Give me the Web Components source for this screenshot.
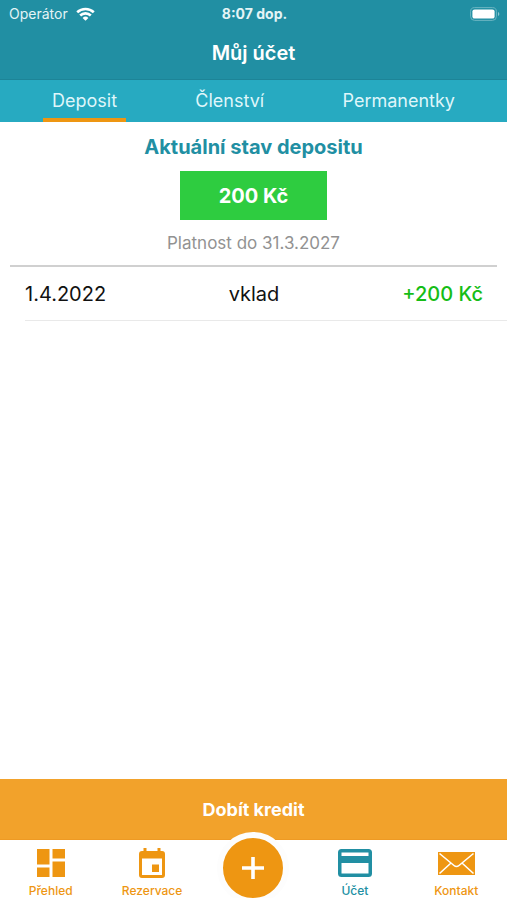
<!DOCTYPE html>
<html lang="cs">
<head>
<meta charset="utf-8">
<meta name="viewport" content="width=device-width, initial-scale=1">
<title>Můj účet</title>
<style>
  html, body { margin: 0; height: 100%; }
  body {
    font-family: Inter, Roboto, "Liberation Sans", sans-serif;
    color: #111;
    background: #fff;
    --teal: #218fa3;
    --cyan: #27aac1;
    --orange: #ee9612;
  }
</style>
</head>
<body>
<account-app></account-app>
<script>
const define = (name, html) => {
  const template = document.createElement('template');
  template.innerHTML = html;
  customElements.define(name, class extends HTMLElement {
    constructor() {
      super();
      this.attachShadow({ mode: 'open' }).append(template.content.cloneNode(true));
    }
  });
};

define('status-bar', `
  <style>
    :host { display: grid; grid-template-columns: 1fr auto 1fr; align-items: center; height: 28px; padding: 0 7px 0 9px; font-size: 14px; line-height: 28px; color: #e4f4f6; }
    .carrier { display: flex; align-items: center; gap: 8px; }
    time { font-weight: 700; }
    .battery { justify-self: end; }
    svg { display: block; }
  </style>
  <span class="carrier"><span>Operátor</span>
    <svg width="19" height="14" viewBox="0 0 19 14" aria-hidden="true" fill="none" stroke="#fff" stroke-width="2.6">
      <path d="M1.2 5.3a12 12 0 0 1 16.6 0"/><path d="M4.2 8.5a7.6 7.6 0 0 1 10.6 0"/>
      <path d="M6.6 10.9a4.2 4.2 0 0 1 5.8 0L9.5 13.8z" fill="#fff" stroke="none"/>
    </svg>
  </span>
  <time>8:07 dop.</time>
  <svg class="battery" width="30" height="14" viewBox="0 0 30 14" aria-hidden="true">
    <rect x=".6" y=".6" width="25.8" height="12.8" rx="4" fill="none" stroke="#6bb5c2"/>
    <rect x="2.4" y="2.4" width="22.2" height="9.2" rx="2.2" fill="#fff"/>
    <path d="M28 5c1.8.6 1.8 3.4 0 4z" fill="#8bc6d0"/>
  </svg>`);

define('page-title', `
  <style>
    :host { display: block; height: 51px; border-bottom: 1px solid #1d8497; }
    h1 { margin: 0; font-size: 20px; line-height: 50px; font-weight: 600; text-align: center; color: #fff; }
  </style>
  <h1><slot></slot></h1>`);

define('tab-bar', `
  <style>
    :host { display: flex; justify-content: space-between; height: 42px; padding: 0 43px; background: var(--cyan); }
  </style>
  <slot></slot>`);

define('tab-item', `
  <style>
    :host { display: flex; }
    button { padding: 4px 9px 0; border: 0; border-bottom: 4px solid transparent; background: none; font: inherit; font-size: 18px; line-height: 34px; color: #dff6fa; }
    :host([selected]) button { border-color: var(--orange); }
  </style>
  <button type="button"><slot></slot></button>`);

define('deposit-summary', `
  <style>
    :host { display: flex; flex-direction: column; align-items: center; margin: 0 10px; padding: 11px 0 9px; border-bottom: 2px solid #d0d0d0; }
    h2 { margin: 0; font-size: 20px; line-height: 28px; font-weight: 700; color: var(--teal); }
    .balance { margin: 10px 0; padding: 1px 39px 0; background: #2ecc40; color: #fff; font-size: 20px; line-height: 48px; font-weight: 700; }
    p { margin: 0; font-size: 17px; line-height: 26px; color: #929292; }
  </style>
  <h2><slot name="heading"></slot></h2>
  <div class="balance"><slot name="balance"></slot></div>
  <p><slot name="validity"></slot></p>`);

define('transaction-list', `
  <style>
    :host { display: block; }
    .list { margin-left: 25px; border-bottom: 1px solid #e9e9e9; padding-right: 24px; }
    table { width: 100%; table-layout: fixed; border-collapse: collapse; font-size: 20px; line-height: 52px; }
    td { padding: 1px 0 0; text-align: center; }
    td:first-child { text-align: left; }
    td:last-child { text-align: right; font-weight: 500; color: #16bd16; }
  </style>
  <div class="list">
    <table aria-label="Pohyby na depositu">
      <tbody><tr><td>1.4.2022</td><td>vklad</td><td>+200 Kč</td></tr></tbody>
    </table>
  </div>`);

define('credit-button', `
  <style>
    :host { display: block; }
    button { display: block; width: 100%; padding: 2px 0 0; border: 0; border-bottom: 1px solid #ee9a24; background: #f2a22b; color: #fff; font: inherit; font-size: 18px; line-height: 58px; font-weight: 700; }
  </style>
  <button type="button"><slot></slot></button>`);

define('nav-bar', `
  <style>
    :host { display: grid; grid-template-columns: repeat(5, 1fr); height: 58px; padding-bottom: 2px; background: #fff; }
  </style>
  <slot></slot>`);

define('nav-item', `
  <style>
    :host { display: block; color: var(--orange); }
    :host([selected]) { color: var(--teal); }
    a { display: flex; flex-direction: column; align-items: center; gap: 3px; padding-top: 5px; color: inherit; text-decoration: none; font-size: 12px; line-height: 14px; font-weight: 500; }
    .icon { display: flex; align-items: center; justify-content: center; height: 36px; }
    ::slotted(svg) { display: block; }
  </style>
  <a href="#"><span class="icon"><slot name="icon"></slot></span><span><slot></slot></span></a>`);

define('add-action', `
  <style>
    :host { display: block; position: relative; }
    .halo { position: absolute; left: 50%; bottom: 0; width: 72px; height: 66px; transform: translateX(-50%); overflow: hidden; }
    button { display: block; box-sizing: border-box; width: 72px; height: 72px; padding: 0; border: 6px solid #fdfdfd; border-radius: 50%; background: var(--orange); }
    svg { display: block; margin: auto; }
  </style>
  <div class="halo"><button type="button" aria-label="Přidat">
    <svg width="24" height="24" viewBox="0 0 24 24" aria-hidden="true"><path d="M12 1v22M1 12h22" stroke="#fff" stroke-width="3.6"/></svg>
  </button></div>`);

define('account-app', `
  <style>
    :host { display: flex; flex-direction: column; min-height: 100vh; }
    header { background: var(--teal); }
    main { flex: 1; }
  </style>
  <header><status-bar></status-bar><page-title>Můj účet</page-title></header>
  <tab-bar>
    <tab-item selected>Deposit</tab-item><tab-item>Členství</tab-item><tab-item>Permanentky</tab-item>
  </tab-bar>
  <main>
    <deposit-summary>
      <span slot="heading">Aktuální stav depositu</span>
      <span slot="balance">200 Kč</span>
      <span slot="validity">Platnost do 31.3.2027</span>
    </deposit-summary>
    <transaction-list></transaction-list>
  </main>
  <credit-button>Dobít kredit</credit-button>
  <nav-bar>
    <nav-item>
      <svg slot="icon" width="28" height="28" viewBox="0 0 28 28" fill="currentColor" aria-hidden="true"><path d="M0 0h12.5v15.5H0zM15.5 0H28v9.5H15.5zM0 18.500h12.500V28H0zM15.500 12.500H28V28H15.500z"/></svg>Přehled
    </nav-item>
    <nav-item>
      <svg slot="icon" width="26" height="30" viewBox="0 0 26 30" aria-hidden="true"><path fill="currentColor" fill-rule="evenodd" d="M4.500 0h3v3h11V0h3v3H23a3 3 0 0 1 3 3v21a3 3 0 0 1-3 3H3a3 3 0 0 1-3-3V6a3 3 0 0 1 3-3h1.500zM3 10.500V27h20V10.500zM13 16.500h7V24h-7z"/></svg>Rezervace
    </nav-item>
    <add-action></add-action>
    <nav-item selected>
      <svg slot="icon" width="34" height="28" viewBox="0 0 34 28" aria-hidden="true"><path fill="currentColor" fill-rule="evenodd" d="M3.500 0h27A3.500 3.500 0 0 1 34 3.500v21a3.500 3.500 0 0 1-3.500 3.500h-27A3.500 3.500 0 0 1 0 24.500v-21A3.500 3.500 0 0 1 3.500 0zM3.500 3.500V7h27V3.500zM3.500 14v10.500h27V14z"/></svg>Účet
    </nav-item>
    <nav-item>
      <svg slot="icon" width="37" height="23" viewBox="0 0 37 23" aria-hidden="true"><rect width="37" height="23" fill="currentColor"/><path d="M1.500 1.500l14.500 12q2.500 2 5 0l14.500-12M1.500 21.500l11.500-10.500M35.500 21.500L24 11" fill="none" stroke="#fff" stroke-width="1.600"/></svg>Kontakt
    </nav-item>
  </nav-bar>`);
</script>
</body>
</html>
